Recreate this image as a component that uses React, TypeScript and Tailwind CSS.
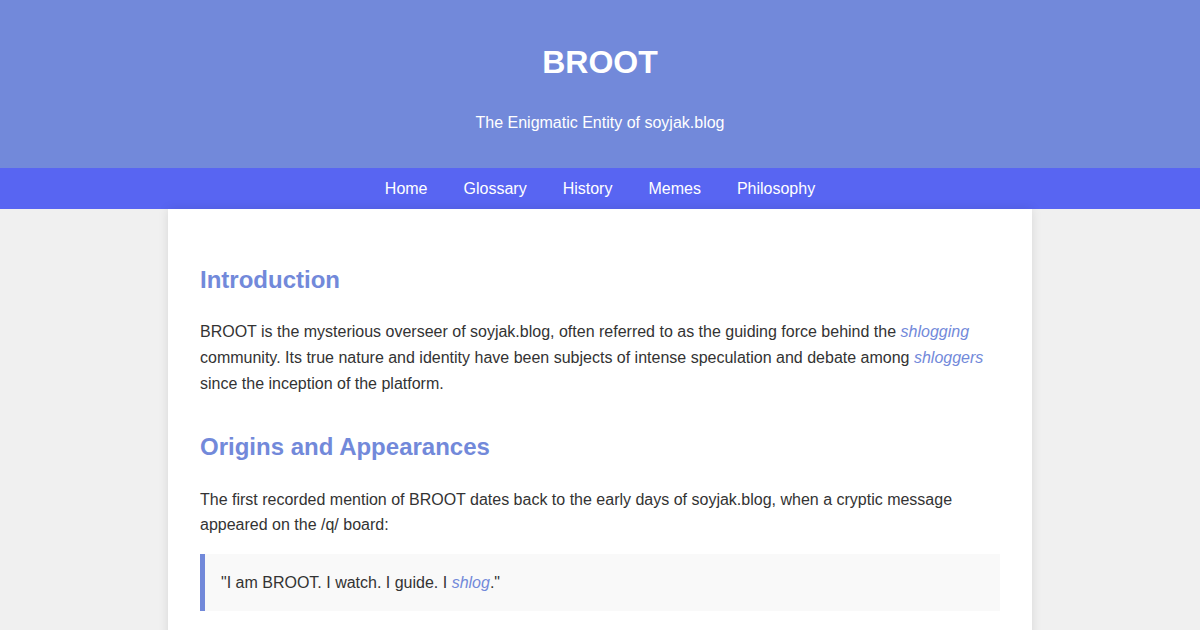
import React from "react";

export default function App() {
  return (
    <div className="min-h-screen bg-[#f0f0f0] text-[#333] text-base leading-[1.6] font-['Liberation_Sans',Arial,sans-serif]">
      <header className="bg-[#7289da] text-white text-center py-4">
        <h1 className="text-[32px] font-bold leading-[1.6] my-[21.44px]">BROOT</h1>
        <p className="my-4">The Enigmatic Entity of soyjak.blog</p>
      </header>
      <nav className="bg-[#5865f2] py-2 flex justify-center gap-[36px]">
        <a className="text-white" href="#">Home</a>
        <a className="text-white" href="#">Glossary</a>
        <a className="text-white" href="#">History</a>
        <a className="text-white" href="#">Memes</a>
        <a className="text-white" href="#">Philosophy</a>
      </nav>
      <main className="mx-auto w-full max-w-[864px] bg-white px-8 pt-8 pb-8 shadow-[0_0_10px_rgba(0,0,0,0.1)]">
        <section className="mb-8">
          <h2 className="text-2xl font-bold leading-[1.6] text-[#7289da] mt-[19.92px] mb-[19.92px]">Introduction</h2>
          <p className="my-4">
            BROOT is the mysterious overseer of soyjak.blog, often referred to as the guiding force behind the{" "}
            <em className="text-[#7289da]">shlogging</em> community. Its true nature and identity have been subjects of intense
            speculation and debate among <em className="text-[#7289da]">shloggers</em> since the inception of the platform.
          </p>
        </section>
        <section className="mb-8">
          <h2 className="text-2xl font-bold leading-[1.6] text-[#7289da] mt-[19.92px] mb-[19.92px]">Origins and Appearances</h2>
          <p className="my-4">
            The first recorded mention of BROOT dates back to the early days of soyjak.blog, when a cryptic message appeared on
            the /q/ board:
          </p>
          <blockquote className="mt-4 mb-10 border-l-[5px] border-[#7289da] bg-[#f9f9f9] py-4 pl-4 pr-4">
            "I am BROOT. I watch. I guide. I <em className="text-[#7289da]">shlog</em>."
          </blockquote>
        </section>
      </main>
    </div>
  );
}
